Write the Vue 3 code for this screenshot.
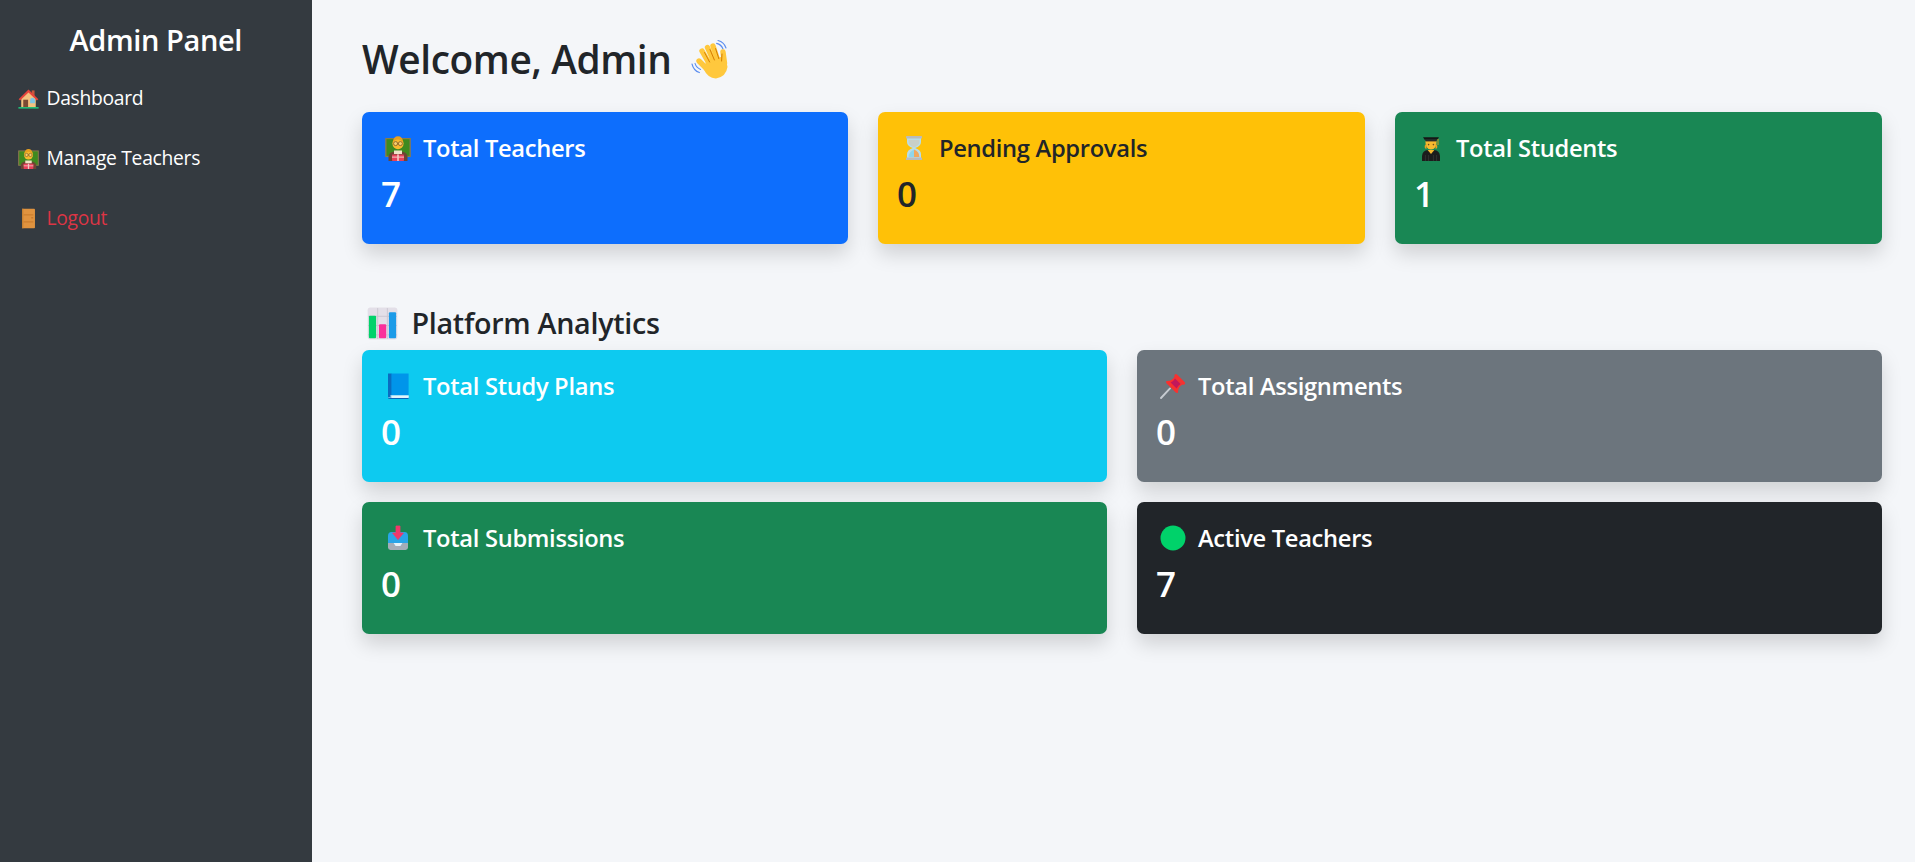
<script setup>
const nav = [
  { label: 'Dashboard', icon: 'house' },
  { label: 'Manage Teachers', icon: 'teacher' },
  { label: 'Logout', icon: 'door', danger: true },
]
const summary = [
  { title: 'Total Teachers', value: 7, icon: 'teacher', tone: 'primary' },
  { title: 'Pending Approvals', value: 0, icon: 'hourglass', tone: 'warning' },
  { title: 'Total Students', value: 1, icon: 'student', tone: 'success' },
]
const analytics = [
  { title: 'Total Study Plans', value: 0, icon: 'book', tone: 'info' },
  { title: 'Total Assignments', value: 0, icon: 'pin', tone: 'secondary' },
  { title: 'Total Submissions', value: 0, icon: 'inbox', tone: 'success' },
  { title: 'Active Teachers', value: 7, icon: 'dot', tone: 'dark' },
]
</script>

<template>
  <div class="layout">
    <svg class="sprite" xmlns="http://www.w3.org/2000/svg">
      <symbol id="house" viewBox="0 0 26 26">
        <rect x="17" y="3" width="3.5" height="8" fill="#c9563c" />
        <path d="M4 12 L13 4 L22 12 V24 H4 Z" fill="#f3c27f" />
        <path d="M0.8 14 L13 2 L25.2 14 L23.4 15.6 L13 5.6 L2.6 15.6 Z" fill="#e5453c" />
        <rect x="6.5" y="14.5" width="6" height="9.5" fill="#7b4a33" />
        <path d="M15 15 a3 3 0 0 1 6 0 v4 h-6 Z" fill="#7fc4e4" />
        <rect x="0.5" y="23.6" width="25" height="1.9" fill="#1fc27a" />
      </symbol>
      <symbol id="teacher" viewBox="0 0 26 26">
        <rect x="0.2" y="3" width="25.6" height="19" fill="#8a7a4c" />
        <rect x="1.5" y="4.2" width="23" height="16.6" fill="#3f8a1f" />
        <path d="M3.5 26 V21.5 Q4 17.5 9 16.8 H17 Q22 17.5 22.5 21.5 V26 Z" fill="#6d4434" />
        <rect x="9" y="15.5" width="8" height="3.5" fill="#efe3c8" />
        <circle cx="13" cy="8.6" r="5.6" fill="#f7b92f" />
        <path d="M7.8 7 Q8.5 1.2 13 1.2 Q17.5 1.2 18.2 7 Q15 4.4 13 4.6 Q10.6 4.4 7.8 7 Z" fill="#e8a020" />
        <circle cx="10.6" cy="8.6" r="2" fill="#f7d070" stroke="#6e4b1f" stroke-width="0.7" />
        <circle cx="15.4" cy="8.6" r="2" fill="#f7d070" stroke="#6e4b1f" stroke-width="0.7" />
        <path d="M12.6 8.6 h0.8" stroke="#6e4b1f" stroke-width="0.7" />
        <rect x="7" y="19.4" width="12" height="6.6" rx="0.8" fill="#e8405a" />
        <rect x="12.2" y="19.4" width="1.6" height="6.6" fill="#f4c9c4" />
        <rect x="7" y="21.6" width="12" height="1" fill="#f4c9c4" />
      </symbol>
      <symbol id="door" viewBox="0 0 26 26">
        <rect x="5" y="0.8" width="16" height="24.4" rx="1" fill="#e0933f" />
        <path d="M7 8.5 H19 M7 17.2 H19" stroke="#c47628" stroke-width="1.1" />
        <rect x="5" y="0.8" width="1.6" height="24.4" fill="#c98232" />
        <rect x="16.4" y="11.6" width="2.4" height="1.2" fill="#b96d22" />
      </symbol>
      <symbol id="hourglass" viewBox="0 0 26 26">
        <path d="M6 3 H20 V7 Q20 11 14.2 13 Q20 15 20 19 V23 H6 V19 Q6 15 11.8 13 Q6 11 6 7 Z" fill="#b8dde8" />
        <path d="M7.6 5 H18.4 V7 Q18.4 10 13 12.5 Q7.6 10 7.6 7 Z" fill="#c8cfc7" />
        <path d="M13 14.5 Q18.4 16.5 18.4 22 H12 Z" fill="#f0a860" />
        <path d="M13 14.5 Q7.6 17 7.6 22 H13 Z" fill="#8fd6ec" />
        <rect x="5" y="1" width="16" height="2.6" rx="0.6" fill="#b9bcbc" />
        <rect x="5" y="22.4" width="16" height="2.6" rx="0.6" fill="#b9bcbc" />
      </symbol>
      <symbol id="student" viewBox="0 0 26 26">
        <path d="M4 26 V21 Q4.5 15.6 10 15 H16 Q21.5 15.6 22 21 V26 Z" fill="#1c1c1c" />
        <path d="M9.6 15 L13 19 L16.4 15 Z" fill="#f7b92f" />
        <path d="M7.4 20 V26 M10.6 20 V26 M15.4 20 V26 M18.6 20 V26" stroke="#3a3a3a" stroke-width="0.7" />
        <path d="M7.4 6 Q7.2 14.5 13 14.5 Q18.8 14.5 18.6 6 Z" fill="#f7b92f" />
        <path d="M6.8 10.5 Q6.2 13.5 8.4 14 L8.6 9 Z M19.2 10.5 Q19.8 13.5 17.6 14 L17.4 9 Z" fill="#e8a020" />
        <path d="M5 2.2 H21 L19.4 4.8 H6.6 Z" fill="#161616" />
        <path d="M7.4 4.4 H18.6 V6.4 H7.4 Z" fill="#2a2a2a" />
        <circle cx="10.6" cy="9.6" r="0.8" fill="#6e4b1f" />
        <circle cx="15.4" cy="9.6" r="0.8" fill="#6e4b1f" />
        <path d="M20 4 V10" stroke="#e8a020" stroke-width="0.9" />
      </symbol>
      <symbol id="book" viewBox="0 0 26 26">
        <path d="M3 23.5 Q3 25.5 5 25.5 H23.6 V22.5 H5.5 Z" fill="#dff3fb" />
        <path d="M3 25 H23.6 V26 H5 Q3 26 3 25 Z" fill="#0a63b8" />
        <rect x="6" y="0.5" width="17.6" height="22" fill="#0095ea" />
        <rect x="3" y="0.5" width="3.4" height="24" fill="#0a6cc0" />
        <rect x="5.4" y="22.4" width="18.2" height="1.2" fill="#e8f6fb" />
      </symbol>
      <symbol id="inbox" viewBox="0 0 26 26">
        <path d="M3 11 Q3 7 6.5 7 H19.5 Q23 7 23 11 V23 H3 Z" fill="#29a5e8" />
        <path d="M3 18 H8.5 L10.5 21 H15.5 L17.5 18 H23 V22.6 Q23 25 20.5 25 H5.5 Q3 25 3 22.6 Z" fill="#a4adb8" />
        <path d="M8.5 18 H17.5 L15.5 21 H10.5 Z" fill="#e8f2f8" />
        <path d="M11 1 H15 V8 H18.4 L13 14.6 L7.6 8 H11 Z" fill="#f0386b" stroke="#f0386b" stroke-width="0.8" stroke-linejoin="round" />
      </symbol>
      <symbol id="pin" viewBox="0 0 26 26">
        <path d="M1 25 L10 15.4" stroke="#c6cbd1" stroke-width="1.9" stroke-linecap="round" />
        <path d="M6.6 8 Q12 8.4 14.6 3.6 L22.4 11.4 Q17.8 14 18 19.4 Q17.2 20.6 15.8 19.6 L6.4 10.2 Q5.4 8.6 6.6 8 Z" fill="#f8312f" />
        <path d="M14.8 1.6 Q15.8 0.4 17 1.4 L24.8 9.2 Q25.8 10.4 24.4 11.4 Q23 12.2 22 11.2 L14.8 4 Q13.8 2.8 14.8 1.6 Z" fill="#f8312f" />
        <path d="M10.6 9.4 Q13.6 8.4 15 5.4 L20.6 11 Q17.8 12.6 16.6 15.4 Z" fill="#c2185b" />
      </symbol>
      <symbol id="dot" viewBox="0 0 26 26">
        <circle cx="13" cy="13" r="12.5" fill="#00d26a" />
      </symbol>
      <symbol id="chart" viewBox="0 0 30 32">
        <rect x="0.6" y="0.6" width="28.8" height="30.8" rx="2.5" fill="#e3dfe8" />
        <path d="M1 9 H29 M1 18 H29 M1 27 H29 M10.3 1 V31 M19.7 1 V31" stroke="#cbc6d0" stroke-width="0.9" />
        <rect x="1.8" y="8.6" width="7" height="21.8" rx="1" fill="#00d26a" />
        <rect x="11.6" y="16.8" width="7" height="13.6" rx="1" fill="#f92f9a" />
        <rect x="21.2" y="5" width="7" height="25.4" rx="1" fill="#1c9be8" />
      </symbol>
      <symbol id="wave" viewBox="0 0 40 40">
        <path d="M27 1.5 Q33 2.8 35 9" fill="none" stroke="#5b8def" stroke-width="1.1" stroke-linecap="round" />
        <path d="M25.6 4.4 Q30.4 5.6 32 10" fill="none" stroke="#5b8def" stroke-width="1.1" stroke-linecap="round" />
        <path d="M1 25 Q2.6 31.6 8.4 33.6" fill="none" stroke="#5b8def" stroke-width="1.1" stroke-linecap="round" />
        <path d="M4 24.4 Q5.4 28.8 9.6 30.4" fill="none" stroke="#5b8def" stroke-width="1.1" stroke-linecap="round" />
        <path d="M11 12 L19 26" stroke="#ffc83d" stroke-width="5.4" stroke-linecap="round" />
        <path d="M16.5 8.5 L23 23" stroke="#ffc83d" stroke-width="5.4" stroke-linecap="round" />
        <path d="M22 7 L27 22" stroke="#ffc83d" stroke-width="5.4" stroke-linecap="round" />
        <path d="M32 13 L33.5 24" stroke="#ffc83d" stroke-width="5.4" stroke-linecap="round" />
        <path d="M8 22 L16 30" stroke="#ffc83d" stroke-width="5.4" stroke-linecap="round" />
        <path d="M16 20 L30 18 Q36 22 36.5 28 Q35 38 25 39.4 Q17 39.6 12.6 30 Z" fill="#ffc83d" />
        <path d="M13.6 13.6 L18.6 23 M19 10.6 L23.4 21 M24.6 9.6 L27.8 19.6 M31 15 L30.6 22" stroke="#d67d00" stroke-width="1" stroke-linecap="round" />
      </symbol>
    </svg>

    <aside class="sidebar">
      <h4 class="brand">Admin Panel</h4>
      <a v-for="item in nav" :key="item.label" class="nav-link" :class="{ danger: item.danger }">
        <svg class="nav-icon"><use :href="'#' + item.icon" /></svg>
        <span>{{ item.label }}</span>
      </a>
    </aside>

    <main class="main">
      <h2 class="welcome">
        <span>Welcome, Admin</span>
        <svg class="wave"><use href="#wave" /></svg>
      </h2>

      <section class="grid three">
        <article v-for="c in summary" :key="c.title" class="card" :class="c.tone">
          <h5 class="card-title">
            <svg class="card-icon"><use :href="'#' + c.icon" /></svg>
            <span>{{ c.title }}</span>
          </h5>
          <h3 class="card-value">{{ c.value }}</h3>
        </article>
      </section>

      <h4 class="section-title">
        <svg class="chart"><use href="#chart" /></svg>
        <span>Platform Analytics</span>
      </h4>

      <section class="grid two">
        <article v-for="c in analytics" :key="c.title" class="card" :class="c.tone">
          <h5 class="card-title">
            <svg class="card-icon"><use :href="'#' + c.icon" /></svg>
            <span>{{ c.title }}</span>
          </h5>
          <h3 class="card-value">{{ c.value }}</h3>
        </article>
      </section>
    </main>
  </div>
</template>

<style scoped>
.layout {
  display: flex;
  min-height: 862px;
  background: #f4f6f9;
  color: #212529;
  font-family: "Open Sans", "Noto Sans", sans-serif;
}
.sprite {
  display: none;
}
.sidebar {
  flex: 0 0 312px;
  box-sizing: border-box;
  padding: 22px 0 0 17.5px;
  background: #343a40;
  color: #fff;
}
.brand {
  margin: 0 18px 25px 0;
  font-size: 29px;
  line-height: 36px;
  font-weight: 600;
  letter-spacing: -0.4px;
  text-align: center;
}
.nav-link {
  display: flex;
  align-items: center;
  gap: 8px;
  height: 30px;
  padding: 0 0 30px;
  font-size: 19.3px;
  line-height: 30px;
  letter-spacing: -0.3px;
  color: #fff;
}
.nav-link.danger {
  color: #dc3545;
}
.nav-icon {
  width: 21px;
  height: 21px;
  flex: none;
}
.main {
  flex: 1;
  min-width: 0;
  padding: 35px 33px 0 50px;
}
.welcome {
  display: flex;
  align-items: center;
  gap: 20px;
  margin: 0 0 29px;
  font-size: 38.8px;
  line-height: 48px;
  font-weight: 600;
  letter-spacing: -0.4px;
}
.wave {
  width: 40px;
  height: 40px;
  flex: none;
}
.grid {
  display: grid;
  column-gap: 30px;
  row-gap: 20px;
}
.three {
  grid-template-columns: 486px 487px 487px;
}
.two {
  grid-template-columns: repeat(2, 1fr);
}
.card {
  padding: 21px 20px 19px;
  border-radius: 7px;
  color: #fff;
  box-shadow: 0 10px 20px rgba(0, 0, 0, 0.15);
}
.primary { background: #0d6efd; }
.warning { background: #ffc107; color: #212529; }
.success { background: #198754; }
.info { background: #0dcaf0; }
.secondary { background: #6c757d; }
.dark { background: #212529; }
.card-title {
  display: flex;
  align-items: center;
  gap: 12px;
  margin: 0 0 10px;
  font-size: 23.7px;
  line-height: 30px;
  font-weight: 600;
  letter-spacing: -0.3px;
}
.card-icon {
  width: 26px;
  height: 26px;
  flex: none;
  margin-left: 3px;
}
.card-value {
  margin: 0 0 10px -1px;
  font-size: 35px;
  line-height: 42px;
  font-weight: 600;
}
.section-title {
  display: flex;
  align-items: center;
  gap: 14px;
  margin: 61px 0 9px;
  font-size: 28.7px;
  line-height: 36px;
  font-weight: 600;
  letter-spacing: -0.3px;
}
.chart {
  width: 31px;
  height: 33px;
  flex: none;
  margin-left: 4.5px;
}
</style>
